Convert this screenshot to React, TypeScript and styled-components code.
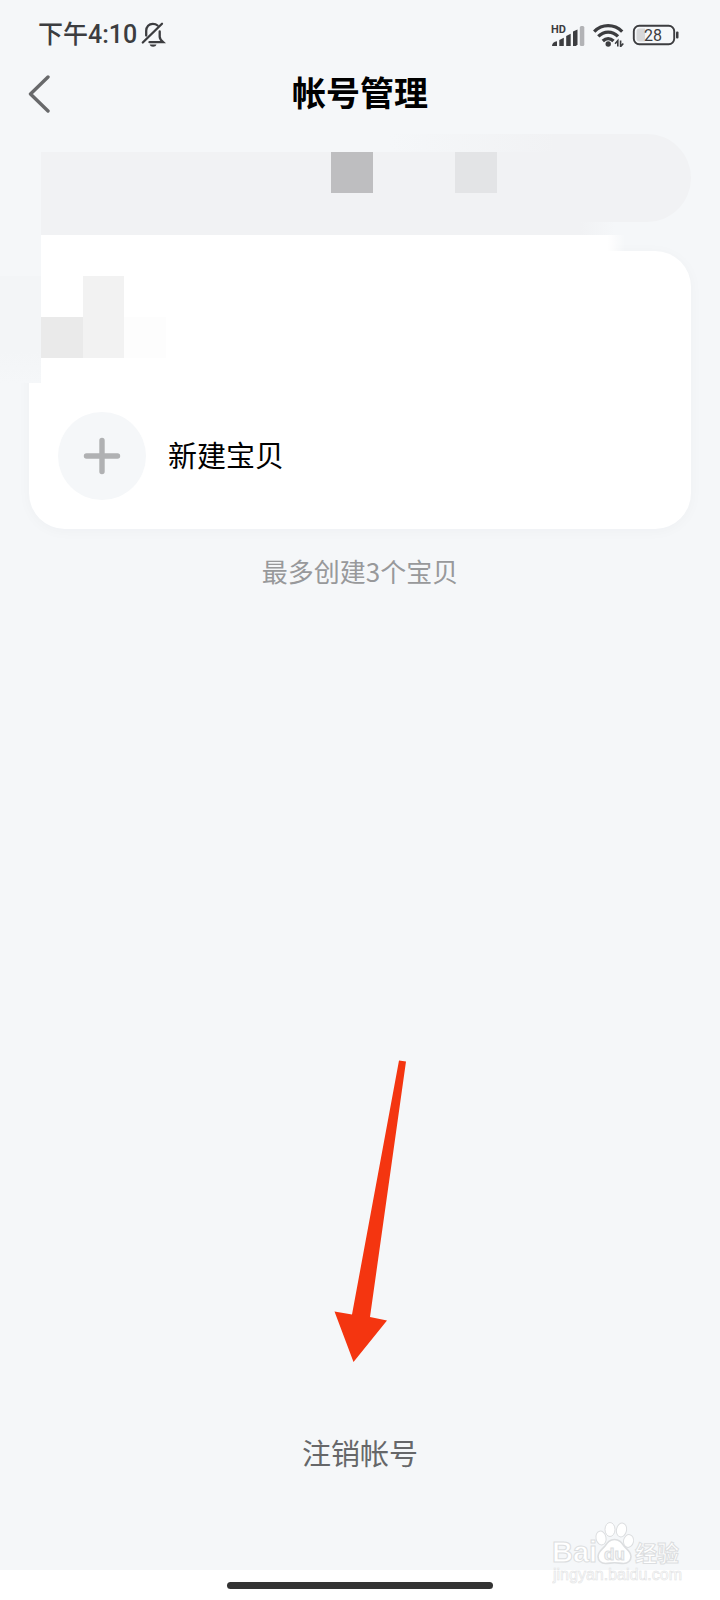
import React from "react";
import styled, { createGlobalStyle } from "styled-components";

const color = {
  page: "#f5f7f9",
  ink: "#3c3d40",
  panel: "#f1f2f4",
  muted: "#98999b",
};

const GlobalStyle = createGlobalStyle`
  * { box-sizing: border-box; }
  body {
    margin: 0;
    background: ${color.page};
    font-family: "Noto Sans CJK SC", sans-serif;
  }
  button { font-family: inherit; border: 0; background: none; padding: 0; cursor: pointer; }
  svg { display: block; }
`;

const Screen = styled.div`
  position: relative;
  display: flex;
  flex-direction: column;
  min-height: 100vh;
  overflow: hidden;
  background: ${color.page};
`;

const StatusBar = styled.div`
  display: flex;
  align-items: center;
  justify-content: space-between;
  height: 70px;
  padding: 0 41px 0 38px;
  color: ${color.ink};
`;

const StatusGroup = styled.div<{ $gap: number }>`
  display: flex;
  align-items: center;
  gap: ${(p) => p.$gap}px;
`;

const Clock = styled.time`
  font-family: Roboto, "Noto Sans CJK SC", sans-serif;
  font-size: 25px;
  line-height: 32px;
  font-weight: 500;
`;

const Header = styled.header`
  display: grid;
  grid-template-columns: 80px 1fr 80px;
  align-items: center;
  height: 48px;
`;

const BackButton = styled.button`
  display: flex;
  align-items: center;
  height: 48px;
  padding-left: 28px;
`;

const Title = styled.h1`
  margin: 0;
  padding-bottom: 4px;
  color: #000;
  font-size: 34px;
  line-height: 40px;
  font-weight: 600;
  text-align: center;
`;

const Content = styled.main`
  display: flex;
  flex-direction: column;
  flex: 1;
  padding: 16px 29px 0;
`;

const Banner = styled.section`
  position: relative;
  height: 88px;
  border-radius: 44px;
  background: ${color.panel};
`;

const Card = styled.section`
  position: relative;
  display: flex;
  flex-direction: column;
  justify-content: flex-end;
  min-height: 278px;
  margin-top: 29px;
  padding: 29px;
  border-radius: 36px;
  background: #fff;
  box-shadow: 0 2px 14px rgba(40, 44, 60, 0.03);
`;

/* Censored areas that lie over the banner and the card. */
const Mask = styled.div<{
  $top: number;
  $left: number;
  $height: number;
  $width?: number;
  $right?: number;
  $fill: string;
}>`
  position: absolute;
  top: ${(p) => p.$top}px;
  left: ${(p) => p.$left}px;
  height: ${(p) => p.$height}px;
  ${(p) => (p.$width ? `width: ${p.$width}px;` : `right: ${p.$right}px;`)}
  background: ${(p) => p.$fill};
`;

const CreateButton = styled.button`
  display: flex;
  align-items: center;
  gap: 22px;
  color: #000;
  font-size: 29px;
  line-height: 40px;
`;

const CreateLabel = styled.span`
  padding-bottom: 4px;
`;

const PlusCircle = styled.span`
  display: flex;
  align-items: center;
  justify-content: center;
  width: 88px;
  height: 88px;
  border-radius: 50%;
  background: ${color.page};
`;

const Note = styled.p`
  margin: 22px 0 0;
  color: ${color.muted};
  font-size: 26px;
  line-height: 40px;
  text-align: center;
`;

const Footer = styled.footer`
  display: flex;
  justify-content: center;
  padding-bottom: 98px;
`;

const DeleteButton = styled.button`
  color: #666769;
  font-size: 29px;
  line-height: 40px;
`;

const NavBar = styled.div`
  display: flex;
  align-items: center;
  justify-content: center;
  height: 30px;
  background: #fff;
`;

const Handle = styled.div`
  width: 37%;
  height: 7px;
  border-radius: 4px;
  background: #333;
`;

const Arrow = styled.svg`
  position: absolute;
  bottom: 238px;
  left: calc(50% - 26px);
  pointer-events: none;
`;

const Watermark = styled.div`
  position: absolute;
  right: 36px;
  bottom: 12px;
  pointer-events: none;
`;

function BellOff() {
  return (
    <svg width="25" height="26" viewBox="0 0 25 26" fill="none" stroke={color.ink} strokeWidth="2.300" strokeLinecap="round" aria-label="静音">
      <path d="M5.200 13.500V8.800C5.200 4.500 8 1.800 11.800 1.800c2 0 3.600.6 4.800 1.700" />
      <path d="M1.800 20.500 21 1.800" />
      <path d="M18.700 9.500v5.200c0 2.200 1 3.400 3.400 5.500H8.500" />
      <path d="M8.700 22.600h6.800c-.5 1.500-1.700 2.200-3.400 2.200s-2.900-.7-3.400-2.200z" fill={color.ink} stroke="none" />
    </svg>
  );
}

function Signal() {
  return (
    <svg width="34" height="24" viewBox="0 0 34 24" fill={color.ink} aria-label="信号">
      <text x="0" y="10" fontFamily="Roboto, sans-serif" fontSize="11" fontWeight="700">HD</text>
      <path d="M1 23c0-2.500 2-4.500 5-4.700V23z" />
      <path d="M8.300 23v-6l4.500-2.200V23z" />
      <path d="M15.200 23V13l4.500-2.200V23z" />
      <path d="M22 23V8.500l4.500-2V21.500L25 23z" />
      <rect x="28.800" y="3" width="4.500" height="20" rx="1.500" fill="#b2b3b6" />
    </svg>
  );
}

function Wifi() {
  return (
    <svg width="31" height="24" viewBox="0 0 31 24" fill="none" stroke={color.ink} strokeWidth="3.300" aria-label="无线网络">
      <path d="M1.200 8.600C9.200 .7 21 .7 29.200 8.600" />
      <path d="M5.300 13.300C11 7.600 19.300 7.600 25 13.300" />
      <path d="M9.800 18c3.300-3.200 7.400-3.200 10.700 0" />
      <circle cx="15.200" cy="21" r="2.700" fill={color.ink} stroke="none" />
      <path d="M24.800 23.600v-6l-2.700 3.200M27.600 17.600v6l2.700-3.200" strokeWidth="1.600" />
    </svg>
  );
}

function Battery() {
  return (
    <svg width="47" height="22" viewBox="0 0 47 22" aria-label="电量 28%">
      <rect x="1.800" y="1.800" width="40.400" height="18.400" rx="5.500" fill="none" stroke={color.ink} strokeWidth="1.900" />
      <path d="M13 4.500H7.500a3 3 0 0 0-3 3v7a3 3 0 0 0 3 3H13z" fill="#d6d7d9" />
      <rect x="44" y="7.500" width="2.500" height="7" rx="1" fill={color.ink} />
      <text x="21" y="17" fontFamily="Roboto, sans-serif" fontSize="16" textAnchor="middle" fill={color.ink}>28</text>
    </svg>
  );
}

function WatermarkLogo() {
  return (
    <svg width="132" height="66" viewBox="0 0 132 66" fill="#fff" stroke="#dcdee0" strokeWidth="1">
      <g fontFamily="'Liberation Sans', 'Noto Sans CJK SC', sans-serif" fontWeight="700">
        <text x="0" y="40" fontSize="29">Bai</text>
        <text x="83" y="39" fontSize="22">经验</text>
      </g>
      <ellipse cx="49" cy="16" rx="5" ry="7" transform="rotate(-12 49 16)" />
      <ellipse cx="58" cy="7.500" rx="5" ry="7" />
      <ellipse cx="69.500" cy="8" rx="5" ry="7" transform="rotate(12 69.500 8)" />
      <ellipse cx="76.500" cy="19" rx="5" ry="6.500" transform="rotate(12 76.500 19)" />
      <path d="M62.500 17.500c-5 0-7 3-9.500 6.500-3 3.500-7 5.500-7 10.500 0 4 3 7 7.500 7 3 0 6-.8 9-.8s6 .8 9 .8c4.500 0 7.500-3 7.500-7 0-5-4-7-7-10.500-2.500-3.500-4.500-6.500-9.500-6.500z" strokeWidth="1.600" />
      <text x="62.500" y="38" fontFamily="'Liberation Sans', sans-serif" fontSize="17" fontWeight="700" fill="#f5f7f9" textAnchor="middle">du</text>
      <text x="1" y="58" fontFamily="'Liberation Sans', sans-serif" fontSize="16" strokeWidth="0.600" stroke="#e2e3e4">jingyan.baidu.com</text>
    </svg>
  );
}

export default function App() {
  return (
    <Screen>
      <GlobalStyle />
      <StatusBar>
        <StatusGroup $gap={4}>
          <Clock>下午4:10</Clock>
          <BellOff />
        </StatusGroup>
        <StatusGroup $gap={8}>
          <Signal />
          <Wifi />
          <Battery />
        </StatusGroup>
      </StatusBar>

      <Header>
        <BackButton aria-label="返回">
          <svg width="24" height="38" viewBox="0 0 24 38" fill="none" stroke="#68696b" strokeWidth="3.400" strokeLinecap="round" strokeLinejoin="round">
            <path d="M20 2 2.500 19 20 36" />
          </svg>
        </BackButton>
        <Title>帐号管理</Title>
      </Header>

      <Content>
        <Banner>
          <Mask $top={0} $left={0} $height={18} $right={132} $fill={`linear-gradient(90deg, ${color.page} 68%, rgba(245, 247, 249, 0))`} />
          <Mask $top={18} $left={0} $height={83} $width={12} $fill={color.page} />
          <Mask $top={18} $left={12} $height={83} $right={76} $fill={`linear-gradient(90deg, ${color.panel} 94%, rgba(241, 242, 244, 0))`} />
          <Mask $top={18} $left={302} $height={41} $width={42} $fill="#bebec0" />
          <Mask $top={18} $left={426} $height={41} $width={42} $fill="#e3e4e6" />
        </Banner>

        <Card>
          <Mask $top={-16} $left={12} $height={50} $right={66} $fill="linear-gradient(90deg, #fff 97%, rgba(255, 255, 255, 0))" />
          <Mask $top={-16} $left={-29} $height={41} $width={41} $fill={color.page} />
          <Mask $top={25} $left={-29} $height={107} $width={41} $fill="linear-gradient(#f3f5f7 70%, #f5f7f9)" />
          <Mask $top={25} $left={54} $height={82} $width={41} $fill="#f2f2f2" />
          <Mask $top={66} $left={12} $height={41} $width={42} $fill="#eaeaea" />
          <Mask $top={66} $left={95} $height={41} $width={42} $fill="#fdfdfd" />
          <CreateButton>
            <PlusCircle>
              <svg width="38" height="38" viewBox="0 0 38 38" stroke="#b0b1b3" strokeWidth="5.400" strokeLinecap="round">
                <path d="M19 3.500v31M3.500 19h31" />
              </svg>
            </PlusCircle>
            <CreateLabel>新建宝贝</CreateLabel>
          </CreateButton>
        </Card>

        <Note>最多创建3个宝贝</Note>
      </Content>

      <Footer>
        <DeleteButton>注销帐号</DeleteButton>
      </Footer>

      <NavBar>
        <Handle />
      </NavBar>

      <Arrow width="74" height="302" viewBox="334 1060 74 302" fill="#f43510" aria-hidden="true">
        <path d="M399 1060.500 406 1061.500 370 1317 387 1320.500 353.500 1362 334.500 1311.500 352 1314.500z" />
      </Arrow>

      <Watermark>
        <WatermarkLogo />
      </Watermark>
    </Screen>
  );
}
